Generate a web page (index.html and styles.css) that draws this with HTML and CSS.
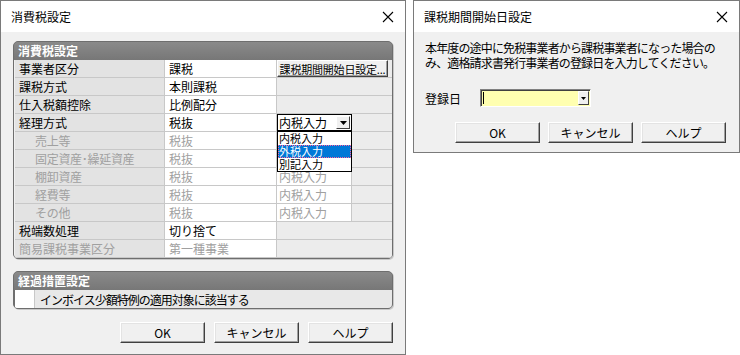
FILE: index.html
```html
<!DOCTYPE html>
<html lang="ja">
<head>
<meta charset="utf-8">
<link rel="stylesheet" href="styles.css">
</head>
<body>
<div class="desk">
  <div class="dlg dlg-main">
    <div class="titlebar">
      <span class="title">消費税設定</span>
      <svg class="close" width="12" height="12" viewBox="0 0 12 12"><path d="M1 1 L11 11 M11 1 L1 11" stroke="#000" stroke-width="1.1" fill="none"/></svg>
    </div>
    <div class="body">
      <div class="panel">
        <div class="panel-head">消費税設定</div>
        <div class="grid">
          <div class="lab">事業者区分</div><div class="val">課税</div><div class="ext"><button class="mini">課税期間開始日設定...</button></div>
          <div class="lab">課税方式</div><div class="val">本則課税</div><div class="ext"></div>
          <div class="lab">仕入税額控除</div><div class="val">比例配分</div><div class="ext"></div>
          <div class="lab">経理方式</div><div class="val">税抜</div>
          <div class="ext">
            <div class="combo open"><span>内税入力</span><span class="cbtn"><svg width="7" height="4" viewBox="0 0 7 4"><path d="M0 0 H7 L3.5 4 Z" fill="#000"/></svg></span></div>
            <ul class="droplist">
              <li>内税入力</li>
              <li class="sel">外税入力</li>
              <li>別記入力</li>
            </ul>
          </div>
          <div class="lab sub dis">売上等</div><div class="val dis">税抜</div><div class="ext"><div class="combo dcombo"></div></div>
          <div class="lab sub dis">固定資産･繰延資産</div><div class="val dis">税抜</div><div class="ext"><div class="combo dcombo"></div></div>
          <div class="lab sub dis">棚卸資産</div><div class="val dis">税抜</div><div class="ext"><div class="combo dcombo">内税入力</div></div>
          <div class="lab sub dis">経費等</div><div class="val dis">税抜</div><div class="ext"><div class="combo dcombo">内税入力</div></div>
          <div class="lab sub dis">その他</div><div class="val dis">税抜</div><div class="ext"><div class="combo dcombo">内税入力</div></div>
          <div class="lab">税端数処理</div><div class="val">切り捨て</div><div class="ext"></div>
          <div class="lab dis">簡易課税事業区分</div><div class="val dis">第一種事業</div><div class="ext"></div>
        </div>
      </div>
      <div class="panel panel2">
        <div class="panel-head">経過措置設定</div>
        <div class="checkrow"><span class="cbox"></span><span class="ctext">インボイス少額特例の適用対象に該当する</span></div>
      </div>
      <div class="btns">
        <button class="btn">OK</button>
        <button class="btn">キャンセル</button>
        <button class="btn">ヘルプ</button>
      </div>
    </div>
  </div>

  <div class="dlg dlg-sub">
    <div class="titlebar">
      <span class="title">課税期間開始日設定</span>
      <svg class="close" width="12" height="12" viewBox="0 0 12 12"><path d="M1 1 L11 11 M11 1 L1 11" stroke="#000" stroke-width="1.1" fill="none"/></svg>
    </div>
    <div class="body sub-body">
      <p class="msg">本年度の途中に免税事業者から課税事業者になった場合の<br>み、適格請求書発行事業者の登録日を入力してください。</p>
      <div class="field">
        <span class="flabel">登録日</span>
        <div class="dateinput"><span class="caret"></span><span class="dbtn"><svg width="5" height="3" viewBox="0 0 5 3"><path d="M0 0 H5 L2.5 3 Z" fill="#000"/></svg></span></div>
      </div>
      <div class="btns btns-sub">
        <button class="btn">OK</button>
        <button class="btn">キャンセル</button>
        <button class="btn">ヘルプ</button>
      </div>
    </div>
  </div>
</div>
</body>
</html>
```
FILE: styles.css
```css
* { box-sizing: border-box; }
html, body { margin: 0; padding: 0; background: #fff; }
body {
  font-family: "Noto Sans CJK JP", "Noto Sans", sans-serif;
  font-size: 12px;
  color: #000;
}
.desk {
  display: flex;
  align-items: flex-start;
  gap: 7px;
  width: 740px;
  height: 355px;
  overflow: hidden;
}
.dlg {
  border: 1px solid #7a7a7a;
  background: #f0f0f0;
  display: flex;
  flex-direction: column;
}
.dlg-main { width: 406px; height: 355px; }
.dlg-sub { width: 327px; height: 153px; }
.titlebar {
  height: 31px;
  background: #fff;
  display: flex;
  align-items: center;
  justify-content: space-between;
  padding: 0 11px 0 10px;
  flex: none;
}
.title { font-size: 12px; line-height: 1; }
.close { display: block; }
.body {
  flex: 1;
  padding: 9px 12px 0 12px;
  display: flex;
  flex-direction: column;
}
.panel {
  border: 1px solid #6e6e6e;
  border-radius: 5px;
  background: #6e6e6e;
  overflow: hidden;
  box-shadow: 1px 1px 0 #c8c8c8;
}
.panel-head {
  height: 18px;
  line-height: 18px;
  padding-left: 4px;
  color: #fff;
  font-weight: bold;
  font-size: 12px;
  background: linear-gradient(#8a8a8a, #777);
}
.grid {
  display: grid;
  grid-template-columns: 150px 112px 1fr;
  grid-auto-rows: 18px;
  row-gap: 0;
  background: #f0f0f0;
  padding-left: 1px;
}
.grid > div {
  border-bottom: 1px solid #c8c8c8;
  line-height: 17px;
  white-space: nowrap;
}
.lab {
  background: #e3e3e3;
  padding-left: 4px;
  border-right: 1px solid #c8c8c8;
}
.lab.sub { padding-left: 20px; letter-spacing: -0.3px; }
.val {
  background: #fff;
  padding-left: 4px;
  border-right: 1px solid #c8c8c8;
}
.ext {
  background: #ececec;
  position: relative;
}
.dis { color: #a0a0a0; }
.mini {
  font: inherit;
  font-size: 11px;
  display: block;
  width: 111px;
  height: 17px;
  margin: 0;
  padding: 0;
  background: #f0f0f0;
  border: 1px solid;
  border-color: #fff #404040 #404040 #fff;
  box-shadow: inset -1px -1px 0 #a0a0a0;
  line-height: 14px;
  letter-spacing: -0.2px;
}
.combo {
  width: 75px;
  height: 17px;
  background: #fff;
  line-height: 15px;
  padding-left: 2px;
}
.combo.open {
  border: 1px solid #000;
  display: flex;
  justify-content: space-between;
  padding-left: 1px;
}
.cbtn {
  width: 14px;
  height: 13px;
  margin: 1px;
  background: #f0f0f0;
  border: 1px solid;
  border-color: #fff #404040 #404040 #fff;
  display: flex;
  align-items: center;
  justify-content: center;
}
.dcombo {
  color: #a0a0a0;
  border-right: 1px solid #c8c8c8;
  line-height: 17px;
}
.droplist {
  position: absolute;
  left: 0;
  top: 17px;
  width: 75px;
  margin: 0;
  padding: 0;
  list-style: none;
  background: #fff;
  border: 1px solid #000;
  z-index: 5;
}
.droplist li {
  height: 13px;
  line-height: 13px;
  font-size: 11px;
  padding-left: 1px;
}
.droplist li.sel {
  background: #0078d7;
  color: #fff;
  outline: 1px dotted #ff60a0;
  outline-offset: -1px;
}
.panel2 { margin-top: 12px; }
.checkrow {
  background: #e8e8e8;
  height: 18px;
  display: flex;
  align-items: center;
  margin-left: 1px;
}
.cbox {
  width: 20px;
  height: 18px;
  background: #fff;
  border-right: 1px solid #c8c8c8;
}
.ctext { padding-left: 5px; letter-spacing: -1px; }
.btns {
  display: flex;
  justify-content: flex-end;
  gap: 9px;
  margin-top: 13px;
}
.btn {
  font: inherit;
  font-size: 12px;
  width: 85px;
  height: 21px;
  margin: 0;
  padding: 0;
  background: #f0f0f0;
  border: 1px solid;
  border-color: #fff #404040 #404040 #fff;
  box-shadow: inset -1px -1px 0 #a0a0a0, inset 1px 1px 0 #e3e3e3;
  color: #000;
}
.sub-body { padding: 8px 10px 0 11px; }
.msg {
  margin: 0;
  line-height: 15px;
  font-size: 12px;
  letter-spacing: -0.85px;
  white-space: nowrap;
}
.field {
  display: flex;
  align-items: center;
  margin-top: 19px;
}
.flabel { width: 55px; }
.dateinput {
  width: 111px;
  height: 18px;
  background: #ffffb0;
  border: 1px solid;
  border-color: #808080 #fff #fff #808080;
  box-shadow: inset 1px 1px 0 #404040;
  display: flex;
  align-items: center;
  justify-content: space-between;
  padding: 0 1px 0 2px;
}
.caret {
  width: 1px;
  height: 12px;
  background: #000;
}
.dbtn {
  width: 11px;
  height: 14px;
  background: #f0f0f0;
  border: 1px solid;
  border-color: #fff #404040 #404040 #fff;
  display: flex;
  align-items: center;
  justify-content: center;
}
.btns-sub { margin-top: 15px; gap: 8px; justify-content: flex-end; padding-right: 3px; }
```
